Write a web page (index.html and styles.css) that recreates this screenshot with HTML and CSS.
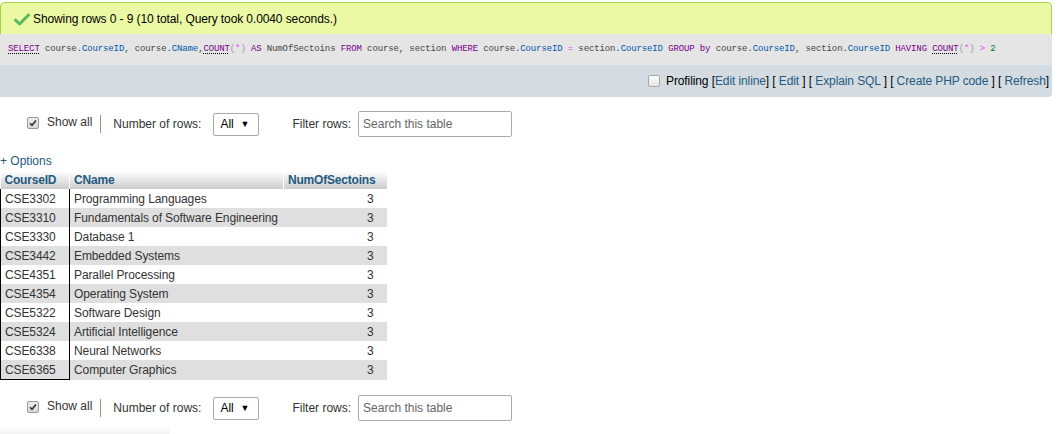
FILE: index.html
```html
<!DOCTYPE html>
<html>
<head>
<meta charset="utf-8">
<link rel="stylesheet" href="styles.css">
</head>
<body>
<div class="result">
  <div class="success">
    <svg class="check" width="16" height="13" viewBox="0 0 16 13"><path d="M1.5 7.2 L5.6 11 L14.5 2" fill="none" stroke="#5cb85c" stroke-width="3" stroke-linecap="round" stroke-linejoin="round"/></svg>
    <span>Showing rows 0 - 9 (10 total, Query took 0.0040 seconds.)</span>
  </div>
  <div class="sql"><span class="kw u">SELECT</span> course.<span class="var">CourseID</span>, course.<span class="var">CName</span>,<span class="fn u">COUNT</span><span class="br">(</span><span class="op">*</span><span class="br">)</span> <span class="kw">AS</span> NumOfSectoins <span class="kw">FROM</span> course, section <span class="kw">WHERE</span> course.<span class="var">CourseID</span> <span class="op">=</span> section.<span class="var">CourseID</span> <span class="kw">GROUP</span> <span class="kw">by</span> course.<span class="var">CourseID</span>, section.<span class="var">CourseID</span> <span class="kw">HAVING</span> <span class="fn u">COUNT</span><span class="br">(</span><span class="op">*</span><span class="br">)</span> <span class="op">&gt;</span> <span class="num">2</span></div>
  <div class="tools">
    <span class="cb"></span>
    <span class="links"><span class="dark">Profiling</span> <span class="dark">[</span><a>Edit inline</a><span class="dark">]</span> <span class="dark">[</span> <a>Edit</a> <span class="dark">]</span> <span class="dark">[</span> <a>Explain SQL</a> <span class="dark">]</span> <span class="dark">[</span> <a>Create PHP code</a> <span class="dark">]</span> <span class="dark">[</span> <a>Refresh</a><span class="dark">]</span></span>
  </div>
</div>

<div class="nav">
  <span class="cb checked"><svg width="8" height="8" viewBox="0 0 8 8"><path d="M1 4.2 L3 6.3 L7 1.5" fill="none" stroke="#333" stroke-width="1.6"/></svg></span>
  <span class="showall">Show all</span>
  <span class="sep"></span>
  <span class="label">Number of rows:</span>
  <span class="select">All<span class="arrow">▼</span></span>
  <span class="label filter">Filter rows:</span>
  <span class="search">Search this table</span>
</div>

<div class="options">+ Options</div>

<table class="data">
  <thead>
    <tr><th class="c1">CourseID</th><th class="c2">CName</th><th class="c3">NumOfSectoins</th></tr>
  </thead>
  <tbody>
    <tr><td class="c1">CSE3302</td><td>Programming Languages</td><td class="n">3</td></tr>
    <tr><td class="c1">CSE3310</td><td>Fundamentals of Software Engineering</td><td class="n">3</td></tr>
    <tr><td class="c1">CSE3330</td><td>Database 1</td><td class="n">3</td></tr>
    <tr><td class="c1">CSE3442</td><td>Embedded Systems</td><td class="n">3</td></tr>
    <tr><td class="c1">CSE4351</td><td>Parallel Processing</td><td class="n">3</td></tr>
    <tr><td class="c1">CSE4354</td><td>Operating System</td><td class="n">3</td></tr>
    <tr><td class="c1">CSE5322</td><td>Software Design</td><td class="n">3</td></tr>
    <tr><td class="c1">CSE5324</td><td>Artificial Intelligence</td><td class="n">3</td></tr>
    <tr><td class="c1">CSE6338</td><td>Neural Networks</td><td class="n">3</td></tr>
    <tr class="last"><td class="c1">CSE6365</td><td>Computer Graphics</td><td class="n">3</td></tr>
  </tbody>
</table>

<div class="nav nav2">
  <span class="cb checked"><svg width="8" height="8" viewBox="0 0 8 8"><path d="M1 4.2 L3 6.3 L7 1.5" fill="none" stroke="#333" stroke-width="1.6"/></svg></span>
  <span class="showall">Show all</span>
  <span class="sep"></span>
  <span class="label">Number of rows:</span>
  <span class="select">All<span class="arrow">▼</span></span>
  <span class="label filter">Filter rows:</span>
  <span class="search">Search this table</span>
</div>
<div class="shadow"></div>
</body>
</html>
```

FILE: styles.css
```css
html, body {
  margin: 0;
  padding: 0;
  background: #fff;
}
body {
  font-family: "Liberation Sans", Arial, sans-serif;
  font-size: 12px;
  color: #444;
  overflow: hidden;
}
.result {
  width: 1052px;
  margin-top: 2px;
}
.success {
  height: 31px;
  background: #ebf8a4;
  border: 1px solid #a2d246;
  border-bottom: none;
  border-radius: 5px 5px 0 0;
  display: flex;
  align-items: center;
  padding-left: 13px;
  color: #000;
  font-size: 12px;
  letter-spacing: -0.1px;
}
.check {
  margin-right: 3px;
  margin-top: 1px;
}
.sql {
  height: 31px;
  line-height: 31px;
  background: #e5e5e5;
  padding-left: 8px;
  font-family: "Liberation Mono", "DejaVu Sans Mono", monospace;
  font-size: 9px;
  letter-spacing: -0.12px;
  color: #444;
  white-space: nowrap;
}
.sql .kw { color: #770088; }
.sql .fn { color: #770088; }
.sql .var { color: #0055aa; }
.sql .op { color: #ee44ee; }
.sql .br { color: #999; }
.sql .num { color: #116644; }
.sql .u {
  text-decoration: underline dotted #000;
  text-underline-offset: 2px;
}
.tools {
  height: 32px;
  background: #d4dce2;
  border-radius: 0 0 4px 0;
  display: flex;
  align-items: center;
  justify-content: flex-end;
  padding-right: 3px;
  color: #235a81;
}
.tools .links {
  white-space: pre;
  letter-spacing: -0.1px;
}
.tools .dark { color: #000; }
.tools a { color: #235a81; }
.cb {
  display: inline-block;
  width: 10px;
  height: 10px;
  border: 1px solid #a8a8a8;
  border-radius: 2px;
  background: linear-gradient(#fbfbfb, #e6e6e6);
  box-sizing: content-box;
}
.tools .cb { margin-right: 6px; }
.cb.checked {
  display: flex;
  align-items: center;
  justify-content: center;
  border-color: #999;
  background: linear-gradient(#eee, #d8d8d8);
}
.nav {
  display: flex;
  align-items: center;
  height: 26px;
  margin-top: 14px;
  padding-left: 27px;
  color: #333;
}
.nav .cb { margin-top: -2px; }
.showall {
  margin-left: 8px;
  margin-top: -4px;
}
.sep {
  width: 1px;
  height: 18px;
  background: #b88877;
  margin-left: 8px;
  margin-right: 12px;
}
.label { color: #333; }
.select {
  margin-left: 12px;
  width: 46px;
  height: 23px;
  box-sizing: border-box;
  border: 1px solid #aaa;
  border-radius: 2px;
  display: flex;
  align-items: center;
  justify-content: space-between;
  padding: 0 9px 0 6px;
  color: #000;
}
.arrow {
  font-size: 9px;
}
.filter { margin-left: 33px; }
.search {
  margin-left: 7px;
  width: 154px;
  height: 26px;
  box-sizing: border-box;
  border: 1px solid #aaa;
  border-radius: 2px;
  display: flex;
  align-items: center;
  padding-left: 4px;
  color: #666;
}
.options {
  margin-top: 17px;
  color: #235a81;
  height: 14px;
  line-height: 14px;
}
.data {
  border-collapse: collapse;
  margin-top: 3px;
  table-layout: fixed;
  width: 386px;
}
.data th {
  box-sizing: border-box;
  height: 18px;
  padding: 0 4px;
  text-align: left;
  font-weight: bold;
  color: #235a81;
  background: linear-gradient(#ffffff, #cccccc);
  border-left: 1px solid #fff;
  white-space: nowrap;
  letter-spacing: -0.2px;
}
.data th.c1 { border-left: none; width: 69px; }
.data th.c2 { width: 214px; }
.data th.c3 { width: 103px; }
.data td {
  height: 19px;
  padding: 0 4px;
  color: #333;
  white-space: nowrap;
  letter-spacing: -0.1px;
}
.data td.c1 {
  border-left: 1px solid #000;
  border-right: 1px solid #000;
}
.data tbody tr:nth-child(even) td { background: #dfdfdf; }
.data tr.last td.c1 { border-bottom: 1px solid #000; }
.data td.n {
  text-align: right;
  padding-right: 13px;
}
.nav2 { margin-top: 15px; }
.shadow {
  margin-top: 5px;
  width: 170px;
  height: 8px;
  background: linear-gradient(#fff, #f4f4f4);
}
```
